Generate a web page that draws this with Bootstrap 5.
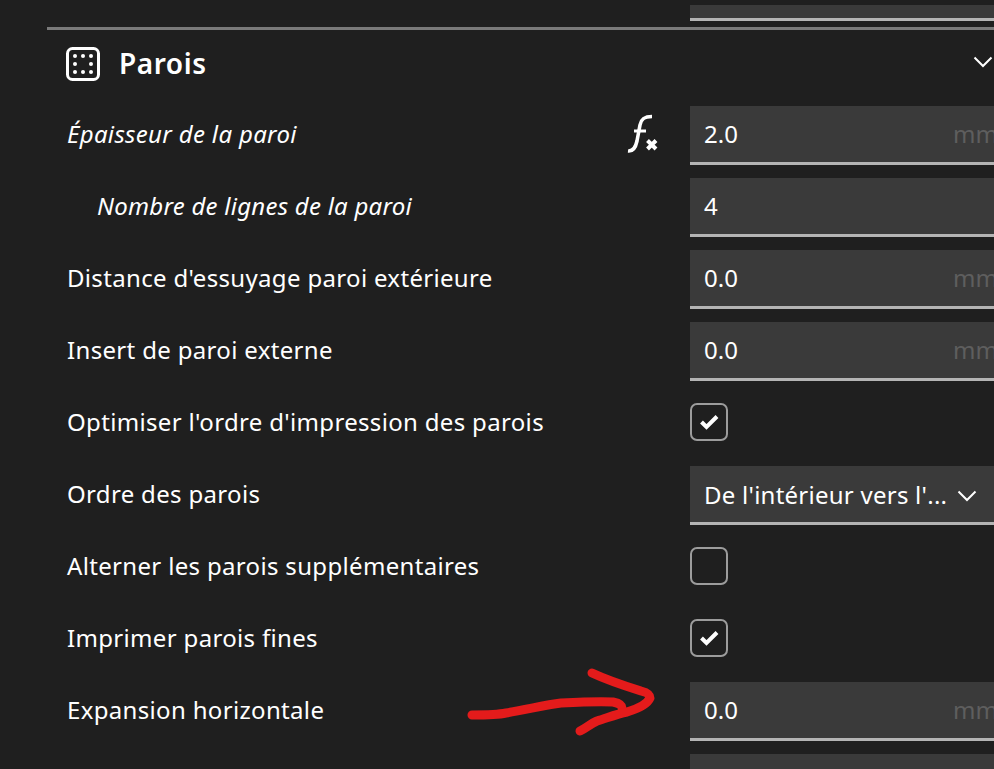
<!DOCTYPE html>
<html lang="fr">
<head>
    <meta charset="UTF-8">
    <meta name="viewport" content="width=device-width, initial-scale=1.0">
    <title>Parois</title>
    <link href="https://cdn.jsdelivr.net/npm/bootstrap@5.3.2/dist/css/bootstrap.min.css" rel="stylesheet">
    <style>
        html, body { height: 769px; overflow: hidden; }
        body { background: #1f1f1f; color: #fff; font-family: "Noto Sans", sans-serif; font-size: 24px; line-height: 1.2; }
        .page-wrap { position: relative; width: 994px; height: 769px; overflow: hidden; padding-top: 5px; }
        .stub-field { margin-left: 690px; height: 16px; background: #3a3a3a; border-bottom: 3px solid #b4b4b4; }
        .section-head { margin: 6px 0 0 47px; height: 79px; padding: 17px 0 0 19px; border-top: 3px solid #7a7a7a; }
        .section-title { margin: -1px 0 0 19px; font-size: 28px; font-weight: 600; line-height: 34px; letter-spacing: .55px; }
        .head-chevron { margin: 9px 1px 0 auto; }
        .set-row { height: 59px; margin-bottom: 13px; padding-left: 67px; }
        .set-label { width: 623px; flex: none; position: relative; letter-spacing: .33px; padding-bottom: 2px; }
        .set-label.indented { padding-left: 30px; letter-spacing: .25px; }
        .fx-icon { position: absolute; left: 557px; top: -7px; }
        .set-field { flex: none; width: 330px; height: 59px; background: #3a3a3a; border-bottom: 3px solid #b4b4b4; padding: 0 0 0 14px; }
        .set-field.is-select { padding-top: 3px; }
        .set-unit { margin-left: auto; margin-right: 22px; color: #5e5e5e; }
        .sel-text { letter-spacing: .25px; }
        .sel-chevron { margin-left: 10px; flex: none; }
        .set-check { width: 38px; height: 38px; margin-bottom: 3px; border: 2.5px solid #9c9c9c; border-radius: 7px; }
        .red-arrow { position: absolute; left: 0; top: 0; pointer-events: none; }
    </style>
</head>
<body>
    <div class="page-wrap">
        <div class="stub-field"></div>

        <div class="section-head d-flex align-items-start">
            <svg width="34" height="34" viewBox="0 0 34 34" fill="none">
                <rect x="1.5" y="1.5" width="31" height="31" rx="5" stroke="#fff" stroke-width="3"/>
                <g fill="#fff">
                    <circle cx="9" cy="9" r="2"/><circle cx="17" cy="9" r="2"/><circle cx="25" cy="9" r="2"/>
                    <circle cx="9" cy="17" r="2"/><circle cx="25" cy="17" r="2"/>
                    <circle cx="9" cy="25" r="2"/><circle cx="17" cy="25" r="2"/><circle cx="25" cy="25" r="2"/>
                </g>
            </svg>
            <span class="section-title">Parois</span>
            <svg class="head-chevron" width="20" height="12" viewBox="0 0 20 12" fill="none">
                <path d="M1.5 1.5 L10 10 L18.5 1.5" stroke="#fff" stroke-width="2"/>
            </svg>
        </div>

        <div class="set-row d-flex align-items-center">
            <div class="set-label fst-italic">
                Épaisseur de la paroi
                <svg class="fx-icon" width="36" height="42" viewBox="0 0 36 42" fill="none">
                    <path d="M4 38 C9 38.5 11.5 35 13 28 L16 12 C17 6 20 3.5 28 3.5" stroke="#fff" stroke-width="3.6"/>
                    <path d="M10 18 H22" stroke="#fff" stroke-width="3"/>
                    <path d="M23.5 27.5 L32 36 M32 27.5 L23.5 36" stroke="#fff" stroke-width="4"/>
                </svg>
            </div>
            <div class="set-field d-flex align-items-center"><span>2.0</span><span class="set-unit">mm</span></div>
        </div>
        <div class="set-row d-flex align-items-center">
            <div class="set-label indented fst-italic">Nombre de lignes de la paroi</div>
            <div class="set-field d-flex align-items-center"><span>4</span></div>
        </div>
        <div class="set-row d-flex align-items-center">
            <div class="set-label">Distance d'essuyage paroi extérieure</div>
            <div class="set-field d-flex align-items-center"><span>0.0</span><span class="set-unit">mm</span></div>
        </div>
        <div class="set-row d-flex align-items-center">
            <div class="set-label">Insert de paroi externe</div>
            <div class="set-field d-flex align-items-center"><span>0.0</span><span class="set-unit">mm</span></div>
        </div>
        <div class="set-row d-flex align-items-center">
            <div class="set-label">Optimiser l'ordre d'impression des parois</div>
            <div class="set-check d-flex align-items-center justify-content-center">
                <svg width="20" height="16" viewBox="0 0 20 16" fill="none"><path d="M2.5 8 L7.5 13 L18 2.5" stroke="#fff" stroke-width="4"/></svg>
            </div>
        </div>
        <div class="set-row d-flex align-items-center">
            <div class="set-label">Ordre des parois</div>
            <div class="set-field is-select d-flex align-items-center">
                <span class="sel-text">De l'intérieur vers l'...</span>
                <svg class="sel-chevron" width="20" height="12" viewBox="0 0 20 12" fill="none"><path d="M1.5 1.5 L10 10 L18.5 1.5" stroke="#fff" stroke-width="2"/></svg>
            </div>
        </div>
        <div class="set-row d-flex align-items-center">
            <div class="set-label">Alterner les parois supplémentaires</div>
            <div class="set-check"></div>
        </div>
        <div class="set-row d-flex align-items-center">
            <div class="set-label">Imprimer parois fines</div>
            <div class="set-check d-flex align-items-center justify-content-center">
                <svg width="20" height="16" viewBox="0 0 20 16" fill="none"><path d="M2.5 8 L7.5 13 L18 2.5" stroke="#fff" stroke-width="4"/></svg>
            </div>
        </div>
        <div class="set-row d-flex align-items-center">
            <div class="set-label">Expansion horizontale</div>
            <div class="set-field d-flex align-items-center"><span>0.0</span><span class="set-unit">mm</span></div>
        </div>
        <div class="set-row d-flex align-items-center">
            <div class="set-label"></div>
            <div class="set-field"></div>
        </div>

        <!-- hand drawn annotation over the screenshot -->
        <svg class="red-arrow" width="994" height="769" fill="none">
            <path d="M472 715 C485 715 497 715 506 713 C525 710 545 705 561 703 C580 702 600 701 613 702 C618 703 622 705 622 708" stroke="#e41b1b" stroke-width="9" stroke-linecap="round" stroke-linejoin="round"/>
            <path d="M580 731 C586 728 590 724 597 721 C607 718 617 714 627 712 C637 709 647 705 650 698 C650 694 645 692 641 691 C625 686 607 680 592 673" stroke="#e41b1b" stroke-width="9" stroke-linecap="round" stroke-linejoin="round"/>
        </svg>
    </div>
    <script src="https://cdn.jsdelivr.net/npm/bootstrap@5.3.2/dist/js/bootstrap.bundle.min.js"></script>
</body>
</html>
